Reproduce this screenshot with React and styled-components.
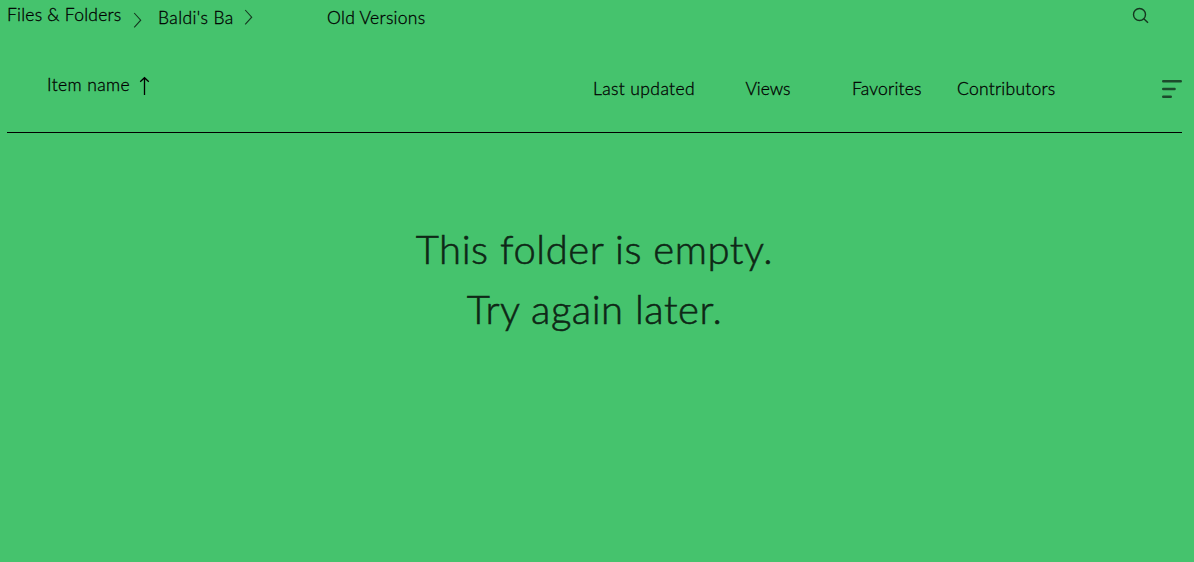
import React from 'react'
import styled, { createGlobalStyle } from 'styled-components'

const colors = {
  background: '#45c36d',
  text: '#000000',
  message: '#0e2716',
  icon: '#15361f',
}

const GlobalStyle = createGlobalStyle`
  body {
    margin: 0;
    background: ${colors.background};
  }
`

const Screen = styled.div`
  box-sizing: border-box;
  min-height: 562px;
  padding: 0 12px 0 7px;
  overflow: hidden;
  background: ${colors.background};
  color: ${colors.text};
  font-family: Lato, 'Liberation Sans', sans-serif;
  font-size: 17.5px;
  font-weight: 300;
  line-height: 24px;
  -webkit-text-stroke: 0.3px ${colors.text};
`

const Toolbar = styled.nav`
  display: flex;
  align-items: flex-start;
  box-sizing: border-box;
  height: 68px;
  padding-top: 3px;
`

const Crumb = styled.span`
  flex: none;
  width: ${props => props.$width}px;
  padding-top: ${props => props.$top || 0}px;
  letter-spacing: ${props => props.$spacing || 0}px;
  white-space: nowrap;
`

const Chevron = styled.svg`
  flex: none;
  width: 9px;
  height: 16px;
  margin: ${props => props.$top}px ${props => props.$gap}px 0 0;
  fill: none;
  stroke: ${colors.icon};
  stroke-width: 1.1;
`

const SearchIcon = styled.svg`
  width: 18px;
  height: 18px;
  margin: 4px 32px 0 auto;
  fill: none;
  stroke: ${colors.icon};
  stroke-width: 1.4;
`

const TableHeader = styled.div`
  display: flex;
  align-items: flex-start;
  box-sizing: border-box;
  height: 65px;
  padding: 5px 0 0 40px;
  border-bottom: 1px solid ${colors.text};
`

const Column = styled(Crumb)`
  color: ${colors.text};
`

const SortArrow = styled.svg`
  flex: none;
  width: 12px;
  height: 20px;
  margin: 3px 443px 0 0;
  fill: none;
  stroke: ${colors.text};
  stroke-width: 1.3;
`

const MenuIcon = styled.svg`
  width: 20px;
  height: 20px;
  margin: 6px 0 0 auto;
  fill: none;
  stroke: #1c4b2c;
  stroke-width: 2.4;
  stroke-linecap: round;
`

const EmptyMessage = styled.div`
  display: flex;
  flex-direction: column;
  align-items: center;
  padding-top: 86px;
  color: ${colors.message};
  font-size: 40px;
  line-height: 60px;
  -webkit-text-stroke: 0.6px ${colors.message};
`

const MessageLine = styled.p`
  margin: 0;
  letter-spacing: ${props => props.$spacing}px;
  white-space: nowrap;
`

const columns = [
  { label: 'Last updated', width: 152.5, spacing: 0.37 },
  { label: 'Views', width: 106.5, spacing: -0.1 },
  { label: 'Favorites', width: 105, spacing: 0.2 },
  { label: 'Contributors', width: 110, spacing: 0.25 },
]

const Separator = props => (
  <Chevron viewBox='0 0 9 16' {...props}>
    <path d='M1.2 1 7.7 8.2 1.2 15.3' />
  </Chevron>
)

const App = () => (
  <>
    <GlobalStyle />
    <Screen>
      <Toolbar>
        <Crumb $width={126} $spacing={0.24}>Files &amp; Folders</Crumb>
        <Separator $top={9} $gap={16} />
        <Crumb $width={86} $top={3} $spacing={0.4}>Baldi&apos;s Ba</Crumb>
        <Separator $top={6} $gap={74} />
        <Crumb $width={110} $top={3} $spacing={0.3}>Old Versions</Crumb>
        <SearchIcon viewBox='0 0 18 18'>
          <circle cx='7.5' cy='7.5' r='6' />
          <path d='m11.8 11.8 4.2 4' />
        </SearchIcon>
      </Toolbar>
      <TableHeader>
        <Column $width={91} $spacing={0.4}>Item name</Column>
        <SortArrow viewBox='0 0 12 20'>
          <path d='M6.5 19V2M2.2 5.8 6.5 1.7l4.3 4.1' />
        </SortArrow>
        {columns.map(({ label, width, spacing }) => (
          <Column key={label} $width={width} $top={4} $spacing={spacing}>{label}</Column>
        ))}
        <MenuIcon viewBox='0 0 20 20'>
          <path d='M1.2 2.2h17.6M1.2 10h11.4M1.2 17.7h7.6' />
        </MenuIcon>
      </TableHeader>
      <EmptyMessage>
        <MessageLine $spacing={0.55}>This folder is empty.</MessageLine>
        <MessageLine $spacing={0.5}>Try again later.</MessageLine>
      </EmptyMessage>
    </Screen>
  </>
)

export default App
